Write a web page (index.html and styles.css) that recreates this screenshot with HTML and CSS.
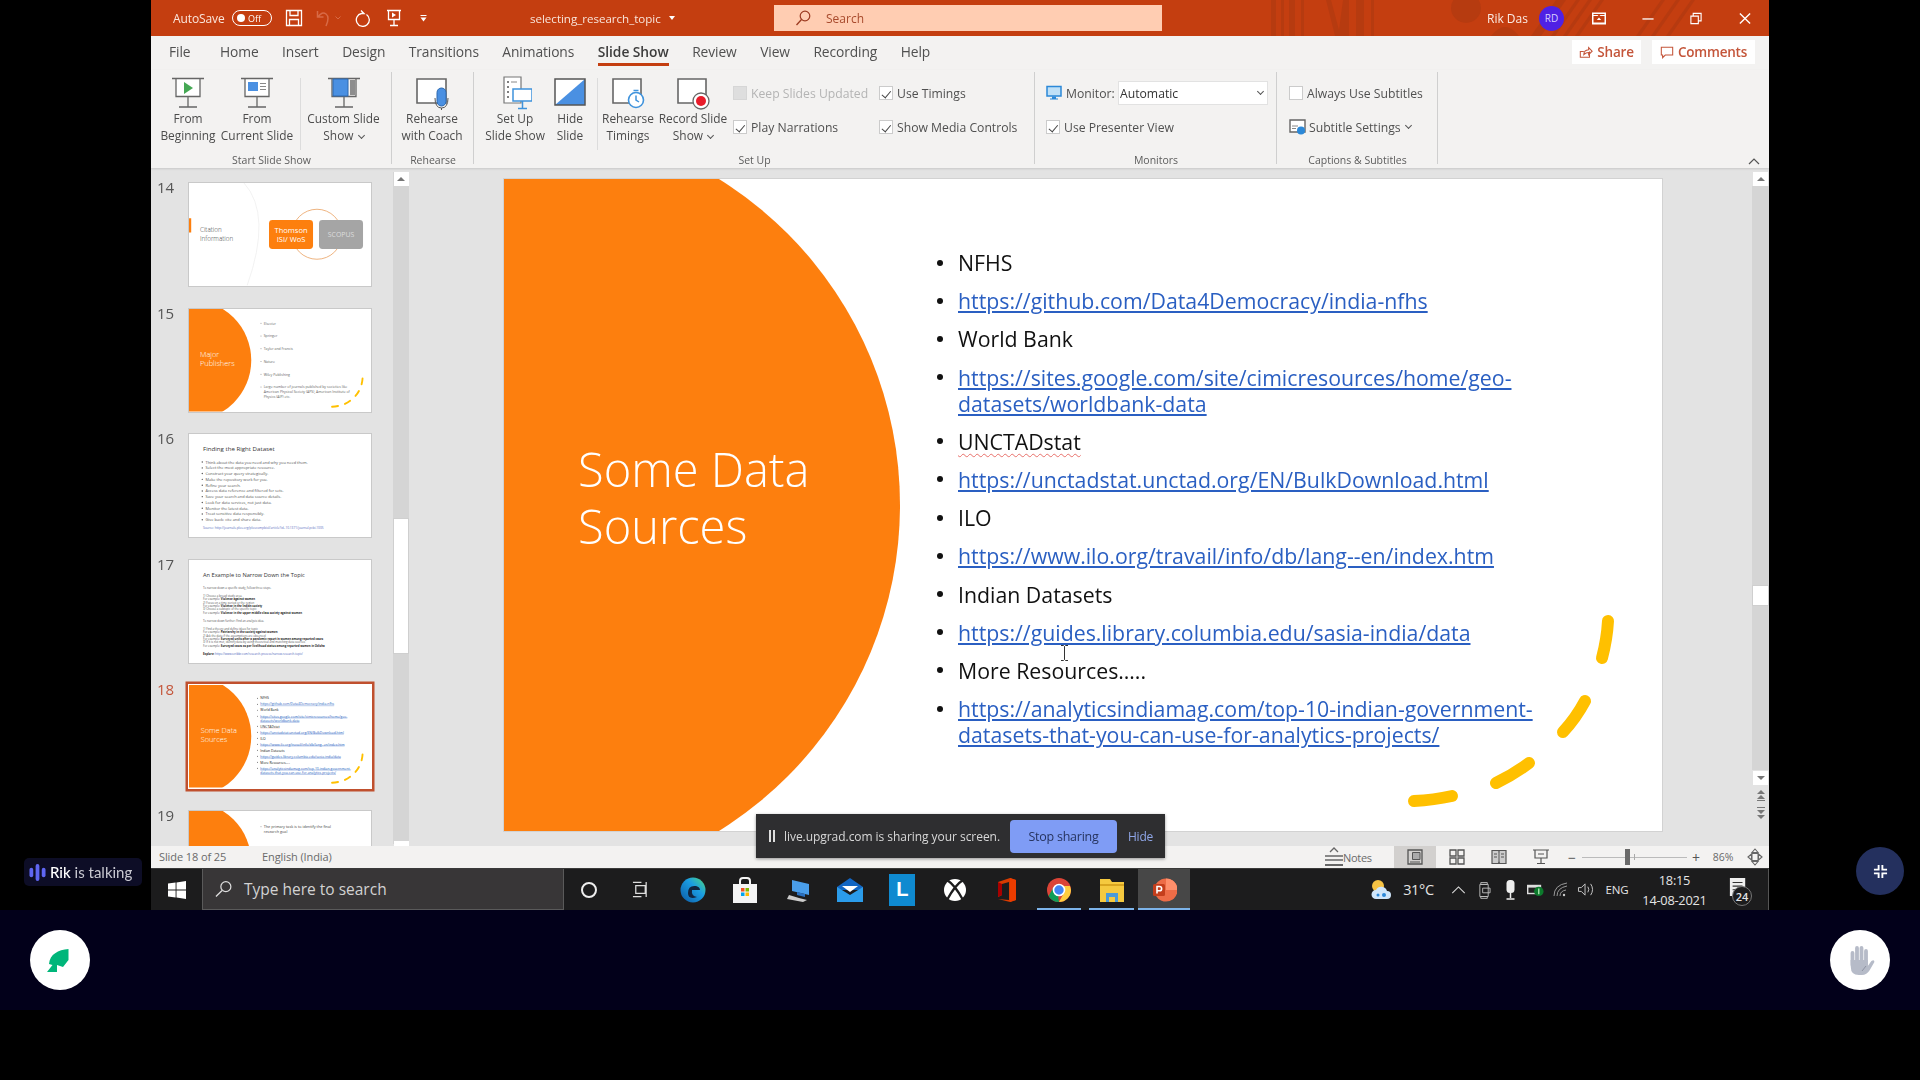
FILE: index.html
```html
<!DOCTYPE html>
<html lang="en">
<head>
<meta charset="utf-8">
<title>selecting_research_topic - PowerPoint</title>
<link rel="stylesheet" href="styles.css">
</head>
<body>
<svg class="defs" width="0" height="0" aria-hidden="true">
  <symbol id="half-circle" viewBox="0 0 1158 652"><circle cx="12" cy="326" r="384" fill="#fd7f0e"/></symbol>
  <symbol id="dashes" viewBox="0 0 1158 652"><g fill="none" stroke="#ffc000" stroke-width="12" stroke-linecap="round"><path d="M1104 442q-1 18-6 37"/><path d="M1081 522q-9 17-22 31"/><path d="M1025 584q-16 12-33 20"/><path d="M948 617q-18 4-38 5"/></g></symbol>
</svg>
<main class="stage">
  <section class="top">
    <aside class="gutter-left">
      <div class="talking">
        <svg class="talk-bars" viewBox="0 0 18 18"><g stroke="#5f66f2" stroke-linecap="round"><path stroke-width="4" d="M2.500 6v6"/><path stroke-width="4" d="M9 2v14"/><path stroke-width="4" d="M15.500 6v6"/></g></svg>
        <span><b>Rik</b> is talking</span>
      </div>
    </aside>

    <div class="window">
      <header class="titlebar">
        <svg class="title-art" viewBox="0 0 1618 36" preserveAspectRatio="none"><g fill="#b23a10" opacity=".75"><path d="M1120 0h5v36h-5zM1130 0h3v36h-3zM1138 0h6v36h-6zM1150 0h3v36h-3zM1175 0h5l8 30 4-30h6v36h-14zM1205 0h8v36h-8zM1220 0h3v36h-3z"/><circle cx="1315" cy="8" r="15"/><path d="M1340 36q14-18 28 0zM1405 0h10l-25 36h-10zM1425 0h4l-25 36h-4zM1437 0h4l-25 36h-4zM1449 0h4l-25 36h-4zM1510 0h4l-25 36h-4zM1525 0h4l-25 36h-4zM1540 0h4l-25 36h-4z"/></g></svg>
        <span class="autosave">AutoSave</span>
        <span class="toggle"><i class="toggle-dot"></i>Off</span>
        <svg class="qat qat-save" viewBox="0 0 18 18"><path fill="none" stroke="#fff" stroke-width="1.300" d="M1.500 1.500h15v15h-15zM5 1.500v5h8v-5M4.500 16.500v-6h9v6"/></svg>
        <svg class="qat qat-undo" viewBox="0 0 14 18"><path fill="none" stroke="#d86a46" stroke-width="1.500" d="M1.500 2v6h6M2 8q4-6 8-3t0 12"/></svg>
        <svg class="qat qat-mini" viewBox="0 0 6 4"><path fill="none" stroke="#d86a46" d="M.5.500L3 3 5.500.5"/></svg>
        <svg class="qat qat-redo" viewBox="0 0 18 18"><path fill="none" stroke="#fff" stroke-width="1.300" d="M6 1.500l3 3H6.500a6.500 6.500 0 1 0 5 1"/></svg>
        <svg class="qat qat-present" viewBox="0 0 16 18"><path fill="none" stroke="#fff" stroke-width="1.300" d="M1 1.500h14M2.500 1.500v9h11v-9M8 10.500v6M4 16.500h8"/><path fill="#fff" d="M6 3.500l4 2.500-4 2.500z"/></svg>
        <svg class="qat qat-more" viewBox="0 0 7 7"><path fill="#fff" d="M.5 0h6v1H.5zM.5 2.500h6L3.500 6.500z"/></svg>
        <div class="doc-title">selecting_research_topic<i class="caret"></i></div>
        <div class="search">
          <svg class="search-glass" viewBox="0 0 16 16"><circle cx="10" cy="6" r="4.800" fill="none" stroke="#9c3a20" stroke-width="1.200"/><path stroke="#9c3a20" stroke-width="1.300" d="M6.500 9.500L1.500 15"/></svg>
          <span>Search</span>
        </div>
        <span class="user">Rik Das</span>
        <span class="avatar">RD</span>
        <div class="winbtn"><svg viewBox="0 0 14 12" class="win-svg"><path fill="#fff" d="M0 0h14v12H0z"/><path fill="#c43e10" d="M1.500 1.500h11v1h-11zM1.500 10v-6.500h4L7 2l1.500 1.500h4V10zM7 5l-2.200 2.500h4.400z"/></svg></div>
        <div class="winbtn"><svg viewBox="0 0 14 14" class="win-svg"><path stroke="#fff" stroke-width="1.400" d="M1 7.500h12"/></svg></div>
        <div class="winbtn"><svg viewBox="0 0 14 14" class="win-svg"><path fill="none" stroke="#fff" stroke-width="1.200" d="M1.500 4.500h8v8h-8zM4 4.500V1.500h8.500v8h-3"/></svg></div>
        <div class="winbtn"><svg viewBox="0 0 14 14" class="win-svg"><path stroke="#fff" stroke-width="1.500" d="M1.500 1.500l11 11M12.500 1.500l-11 11"/></svg></div>
      </header>

      <nav class="tabs">
        <span class="tab tab-file">File</span>
        <span class="tab">Home</span>
        <span class="tab">Insert</span>
        <span class="tab">Design</span>
        <span class="tab">Transitions</span>
        <span class="tab">Animations</span>
        <span class="tab tab-active">Slide Show</span>
        <span class="tab">Review</span>
        <span class="tab">View</span>
        <span class="tab">Recording</span>
        <span class="tab">Help</span>
        <div class="tab-actions">
          <button class="action action-share"><svg viewBox="0 0 16 16"><path fill="none" stroke="#c4553a" stroke-width="1.200" d="M12 7.500v6.500H1.500V7.500h4M5.500 11q0-5 5.500-5.500V3l4 4-4 4V8.500q-3 0-5.500 2.500z"/></svg>Share</button>
          <button class="action action-comments"><svg viewBox="0 0 16 16"><path fill="none" stroke="#c4553a" stroke-width="1.200" d="M1.500 2.500h13v9H6l-3 3v-3H1.500z"/></svg>Comments</button>
        </div>
      </nav>

      <div class="ribbon">
        <section class="group group-start">
          <div class="group-body body-start">
            <div class="rbtn">
              <svg class="ricon" viewBox="0 0 34 34"><path fill="#fff" d="M5 2.500h24v18H5z"/><path fill="none" stroke="#666" stroke-width="1.300" d="M1 2.500h32M5 2.500v18h24v-18M17 20.500v10M8 31h18"/><path fill="#45a854" d="M13 6l9 6-9 6z"/></svg>
              <span>From<br>Beginning</span>
            </div>
            <div class="rbtn">
              <svg class="ricon" viewBox="0 0 34 34"><path fill="#fff" d="M5 2.500h24v18H5z"/><path fill="none" stroke="#666" stroke-width="1.300" d="M1 2.500h32M5 2.500v18h24v-18M17 20.500v10M8 31h18"/><path fill="#4a90e2" d="M8 6h10v9H8z"/><path stroke="#888" d="M20 7.500h6M20 10.500h6M20 13.500h6"/></svg>
              <span>From<br>Current Slide</span>
            </div>
            <i class="rsep"></i>
            <div class="rbtn">
              <svg class="ricon" viewBox="0 0 34 34"><path fill="none" stroke="#666" stroke-width="1.300" d="M1 2.500h32M5 2.500v18h24v-18M17 20.500v10M8 31h18"/><path fill="#4a90e2" stroke="#2c69b0" d="M6 3h15v17H6z"/><path fill="#8d8d8d" d="M23 4h5v15h-5z"/></svg>
              <span>Custom Slide<br>Show <i class="chev"></i></span>
            </div>
          </div>
          <div class="group-label">Start Slide Show</div>
        </section>

        <section class="group group-rehearse">
          <div class="group-body body-rehearse">
            <div class="rbtn">
              <svg class="ricon" viewBox="0 0 34 34"><path fill="#fff" stroke="#666" stroke-width="1.600" d="M2 3h29v24H2z"/><rect x="22" y="12" width="9" height="18" rx="4.500" fill="#4a90e2" stroke="#2c69b0"/><path fill="none" stroke="#555" d="M20 22q0 10 6.500 10t6.500-10M26.500 32v2"/></svg>
              <span>Rehearse<br>with Coach</span>
            </div>
          </div>
          <div class="group-label">Rehearse</div>
        </section>

        <section class="group group-setup">
          <div class="group-body body-setup">
            <div class="rbtn">
              <svg class="ricon" viewBox="0 0 34 34"><path fill="#fff" stroke="#777" stroke-width="1.200" d="M6 1h17v26H6z"/><path stroke="#555" stroke-width="1.500" d="M9 6h2M9 11h2M9 16h2M9 21h2"/><path stroke="#888" d="M13 6h6"/><path fill="#fff" stroke="#3f93dc" stroke-width="1.500" d="M15 13h19v12H15zM24.500 25v7M20 32.500h9"/></svg>
              <span>Set Up<br>Slide Show</span>
            </div>
            <div class="rbtn">
              <svg class="ricon" viewBox="0 0 34 34"><path fill="#fff" d="M2 3h30v26H2z"/><path fill="#4a90e2" d="M32 3v26H2z"/><path fill="none" stroke="#555" stroke-width="1.500" d="M2 3h30v26H2z"/></svg>
              <span>Hide<br>Slide</span>
            </div>
            <i class="rsep"></i>
            <div class="rbtn">
              <svg class="ricon" viewBox="0 0 34 34"><path fill="#fff" stroke="#666" stroke-width="1.600" d="M2 3h28v24H2z"/><circle cx="25" cy="24" r="7.500" fill="#fff" stroke="#3f93dc" stroke-width="1.600"/><path fill="none" stroke="#3f93dc" stroke-width="1.500" d="M25 19.500V24l3 2M22.500 14.500h5"/></svg>
              <span>Rehearse<br>Timings</span>
            </div>
            <div class="rbtn">
              <svg class="ricon" viewBox="0 0 34 34"><path fill="#fff" stroke="#666" stroke-width="1.600" d="M2 3h28v24H2z"/><circle cx="25" cy="25" r="8" fill="#fff" stroke="#666" stroke-width="1.300"/><circle cx="25" cy="25" r="5" fill="#e81c2a"/></svg>
              <span>Record Slide<br>Show <i class="chev"></i></span>
            </div>
            <div class="checks">
              <label class="check check-off"><i class="box box-dim"></i>Keep Slides Updated</label>
              <label class="check"><i class="box box-on"></i>Use Timings</label>
              <label class="check"><i class="box box-on"></i>Play Narrations</label>
              <label class="check"><i class="box box-on"></i>Show Media Controls</label>
            </div>
          </div>
          <div class="group-label">Set Up</div>
        </section>

        <section class="group group-monitors">
          <div class="group-body body-stack">
            <div class="stack-row">
              <svg class="monitor-icon" viewBox="0 0 16 16"><path fill="#bfe0f7" stroke="#2b88d8" stroke-width="1.500" d="M1 1.500h14v9.500H1z"/><path fill="#2b88d8" d="M6 11.500h4v2h2v1H4v-1h2z"/></svg>
              <span class="monitor-label">Monitor:</span>
              <div class="select"><span>Automatic</span><i class="chev"></i></div>
            </div>
            <div class="stack-row"><label class="check"><i class="box box-on"></i>Use Presenter View</label></div>
          </div>
          <div class="group-label">Monitors</div>
        </section>

        <section class="group group-captions">
          <div class="group-body body-stack">
            <div class="stack-row"><label class="check"><i class="box"></i>Always Use Subtitles</label></div>
            <div class="stack-row subtitle-row">
              <svg class="sub-icon" viewBox="0 0 17 16"><path fill="#fff" stroke="#666" stroke-width="1.400" d="M1 1h15v12H1z"/><path stroke="#888" d="M3 7h6M3 9.500h4"/><circle cx="12" cy="11.500" r="4" fill="#2b88d8"/></svg>
              <span>Subtitle Settings</span><i class="chev"></i>
            </div>
          </div>
          <div class="group-label">Captions &amp; Subtitles</div>
        </section>

        <div class="collapse"><svg viewBox="0 0 12 7"><path fill="none" stroke="#555" stroke-width="1.200" d="M1 6l5-5 5 5"/></svg></div>
      </div>

      <div class="workspace">
        <aside class="panel">
          <div class="thumbs">
            <div class="thumb-row">
              <span class="thumb-num">14</span>
              <div class="thumb"><div class="slide">
                <svg class="slide-art" viewBox="0 0 1158 652"><path d="M0 225h14v90H0z" fill="#fd7f0e"/><path fill="none" stroke="#eee" stroke-width="5" d="M350 0q180 200 20 652"/><circle cx="814" cy="326" r="159" fill="none" stroke="#e9a05e" stroke-width="5"/></svg>
                <div class="t14-label">Citation<br>Information</div>
                <div class="t14-box t14-orange">Thomson<br>ISI/ WoS</div>
                <div class="t14-box t14-grey">SCOPUS</div>
              </div></div>
            </div>
            <div class="thumb-row">
              <span class="thumb-num">15</span>
              <div class="thumb"><div class="slide">
                <svg class="slide-art" viewBox="0 0 1158 652"><use href="#half-circle"/><use href="#dashes"/></svg>
                <div class="slide-title title-small">Major<br>Publishers</div>
                <ul class="slide-list list-sparse">
                  <li>Elsevier</li><li>Springer</li><li>Taylor and Francis</li><li>Nature</li><li>Wiley Publishing</li>
                  <li>Large number of journals published by societies like<br>American Physical Society (APS), American Institute of<br>Physics (AIP) etc.</li>
                </ul>
              </div></div>
            </div>
            <div class="thumb-row">
              <span class="thumb-num">16</span>
              <div class="thumb"><div class="slide slide-doc">
                <div class="doc-head">Finding the Right Dataset</div>
                <ul class="doc-list">
                  <li>Think about the data you need and why you need them.</li><li>Select the most appropriate resource.</li><li>Construct your query strategically.</li><li>Make the repository work for you.</li><li>Refine your search.</li><li>Access data reference and filtered for sets.</li><li>Save your search and data source details.</li><li>Look for data services, not just data.</li><li>Monitor the latest data.</li><li>Treat sensitive data responsibly.</li><li>Give back: cite and share data.</li>
                </ul>
                <div class="doc-source">Source: http://journals.plos.org/ploscompbiol/article?id=10.1371/journal.pcbi.1005</div>
              </div></div>
            </div>
            <div class="thumb-row">
              <span class="thumb-num">17</span>
              <div class="thumb"><div class="slide slide-doc">
                <div class="doc-head doc-head-wide">An Example to Narrow Down the Topic</div>
                <div class="doc-para">
                  <p>To narrow down a specific study, follow three steps.</p>
                  <p>1) Choose a broad study area.<br>For example: <b>Violence against women</b><br>2) Focus on a time period or the region<br>For example: <b>Violence in the Indian society</b><br>3) Choose a subtopic of the specific topic<br>For example: <b>Violence in the upper middle class society against women</b></p>
                  <p>To narrow down further: Find an analysis idea.</p>
                  <p>1) Find a theory and define ideas for topic<br>For example: <b>Patriarchy in the society against women</b><br>2) Ask the data if the assumptions are observed<br>For example: <b>Surveyed units after a pandemic report in women among reported cases</b><br>3) If it is not met, identify data by using theoretical and matching data sources<br>For example: <b>Surveyed cases as per livelihood status among reported women in Odisha</b></p>
                  <p class="doc-blue"><b>Explore:</b> https://www.scribbr.com/research-process/narrow-research-topic/</p>
                </div>
              </div></div>
            </div>
            <div class="thumb-row thumb-selected">
              <span class="thumb-num">18</span>
              <div class="thumb"><div class="slide">
                <svg class="slide-art" viewBox="0 0 1158 652"><use href="#half-circle"/><use href="#dashes"/></svg>
                <div class="slide-title">Some Data<br>Sources</div>
                <ul class="slide-list">
                  <li>NFHS</li>
                  <li><a>https://github.com/Data4Democracy/india-nfhs</a></li>
                  <li>World Bank</li>
                  <li><a>https://sites.google.com/site/cimicresources/home/geo-<br>datasets/worldbank-data</a></li>
                  <li><span class="squiggle">UNCTADstat</span></li>
                  <li><a>https://unctadstat.unctad.org/EN/BulkDownload.html</a></li>
                  <li>ILO</li>
                  <li><a>https://www.ilo.org/travail/info/db/lang--en/index.htm</a></li>
                  <li>Indian Datasets</li>
                  <li><a>https://guides.library.columbia.edu/sasia-india/data</a></li>
                  <li>More Resources…..</li>
                  <li><a>https://analyticsindiamag.com/top-10-indian-government-<br>datasets-that-you-can-use-for-analytics-projects/</a></li>
                </ul>
              </div></div>
            </div>
            <div class="thumb-row">
              <span class="thumb-num">19</span>
              <div class="thumb"><div class="slide">
                <svg class="slide-art" viewBox="0 0 1158 652"><use href="#half-circle"/></svg>
                <ul class="slide-list list-sparse list-19"><li>The primary task is to identify the final<br>research goal</li></ul>
              </div></div>
            </div>
          </div>
          <div class="vscroll vscroll-panel">
            <span class="sb-btn"><i class="tri-up"></i></span>
            <span class="sb-gap sb-gap-a"></span>
            <span class="sb-thumb"></span>
            <span class="sb-gap sb-gap-b"></span>
            <span class="sb-btn sb-btn-end"><i class="tri-down"></i></span>
          </div>
        </aside>

        <div class="canvas">
          <div class="slide main-slide">
            <svg class="slide-art" viewBox="0 0 1158 652"><use href="#half-circle"/><use href="#dashes"/></svg>
            <div class="slide-title">Some Data<br>Sources</div>
            <ul class="slide-list">
              <li>NFHS</li>
              <li><a>https://github.com/Data4Democracy/india-nfhs</a></li>
              <li>World Bank</li>
              <li><a>https://sites.google.com/site/cimicresources/home/geo-<br>datasets/worldbank-data</a></li>
              <li><span class="squiggle">UNCTADstat</span></li>
              <li><a>https://unctadstat.unctad.org/EN/BulkDownload.html</a></li>
              <li>ILO</li>
              <li><a>https://www.ilo.org/travail/info/db/lang--en/index.htm</a></li>
              <li>Indian Datasets</li>
              <li><a>https://guides.library.columbia.edu/sasia-india/data</a></li>
              <li>More Resources…..</li>
              <li><a>https://analyticsindiamag.com/top-10-indian-government-<br>datasets-that-you-can-use-for-analytics-projects/</a></li>
            </ul>
            <svg class="ibeam" viewBox="0 0 9 16"><path fill="none" stroke="#333" d="M1 .5h2.500l1 1 1-1H8M4.500 1.500v13M1 15.500h2.500l1-1 1 1H8"/></svg>
          </div>
        </div>

        <div class="vscroll vscroll-main">
          <span class="sb-btn"><i class="tri-up"></i></span>
          <span class="sb-gap sb-gap-c"></span>
          <span class="sb-thumb sb-thumb-small"></span>
          <span class="sb-gap sb-gap-d"></span>
          <span class="sb-btn sb-btn-end"><i class="tri-down"></i></span>
          <svg class="sb-jump" viewBox="0 0 10 12"><path fill="#777" d="M5 0l4 4H1zM5 5l4 4H1zM1 10h8v1H1z"/></svg>
          <svg class="sb-jump" viewBox="0 0 10 12"><path fill="#777" d="M1 0h8v1H1zM5 7L1 3h8zM5 12L1 8h8z"/></svg>
        </div>
      </div>

      <footer class="statusbar">
        <span class="st-slide">Slide 18 of 25</span>
        <span class="st-lang">English (India)</span>
        <div class="st-right">
          <div class="st-notes"><svg viewBox="0 0 18 22"><path fill="none" stroke="#666" stroke-width="1.300" d="M5 6l4-4 4 4M0 10h18M0 14h18"/><path stroke="#666" stroke-width="2" d="M0 19h18"/></svg><span>Notes</span></div>
          <span class="st-view st-view-on"><svg viewBox="0 0 16 16"><path fill="none" stroke="#555" stroke-width="1.300" d="M1 1h14v14H1z"/><path fill="#aaa" stroke="#555" d="M5.500 3.500h7.500v7H5.500z"/><path stroke="#555" d="M3 13h10"/></svg></span>
          <span class="st-view"><svg viewBox="0 0 16 16"><path fill="none" stroke="#555" stroke-width="1.300" d="M1 1h6v6H1zM9 1h6v6H9zM1 9h6v6H1zM9 9h6v6H9z"/></svg></span>
          <span class="st-view"><svg viewBox="0 0 16 16"><path fill="#ccc" stroke="#555" stroke-width="1.200" d="M1 1.500h6.500l.5 1 .5-1H15v13H8.500l-.5-1-.5 1H1z"/><path stroke="#555" d="M3 5h3M3 8h3M10 5h3M10 8h3M8 3v11"/></svg></span>
          <span class="st-view"><svg viewBox="0 0 16 16"><path fill="none" stroke="#555" stroke-width="1.200" d="M0 1h16M2 1v8h12V1M8 9v5M4 14.500h8"/><path stroke="#555" d="M5 5h6"/></svg></span>
          <span class="zoom-sign">−</span>
          <div class="zoom-track"><i class="zoom-tick"></i><i class="zoom-knob"></i></div>
          <span class="zoom-sign zoom-plus">+</span>
          <span class="zoom-pct">86%</span>
          <span class="zoom-fit"><svg viewBox="0 0 16 18"><path fill="none" stroke="#666" stroke-width="1.100" d="M8 1l3 3.500H5zM8 17l3-3.500H5zM1 9l3.500-3v6zM15 9l-3.500-3v6z"/><path fill="none" stroke="#666" d="M5 5.500h6v7H5z"/></svg></span>
        </div>
      </footer>

      <div class="taskbar">
        <span class="start"><svg viewBox="0 0 18 18"><path fill="#fff" d="M0 2.600L7.600 1.500v7H0zM8.500 1.400L18 0v8.500H8.500zM0 9.500h7.600v7L0 15.400zM8.500 9.500H18V18l-9.500-1.400z"/></svg></span>
        <div class="task-search">
          <svg viewBox="0 0 18 18"><circle cx="11.500" cy="6.500" r="5.300" fill="none" stroke="#ddd" stroke-width="1.300"/><path stroke="#ddd" stroke-width="1.400" d="M7.500 10.500L1 17"/></svg>
          <span>Type here to search</span>
        </div>
        <span class="task-cell task-cortana"><i class="ring"></i></span>
        <span class="task-cell task-view"><svg viewBox="0 0 18 18"><path fill="none" stroke="#ddd" stroke-width="1.300" d="M4 5h10v8H4zM1 1.500h9M1 16.500h9M15 1v16"/></svg></span>
        <span class="task-cell"><svg viewBox="0 0 26 26"><defs><linearGradient id="edge" x1="0" y1="1" x2="1" y2="0"><stop offset="0" stop-color="#0c59a4"/><stop offset=".6" stop-color="#1b9de2"/><stop offset="1" stop-color="#4fdc7c"/></linearGradient></defs><circle cx="13" cy="13" r="12.500" fill="url(#edge)"/><path fill="#12253f" d="M8 16q0-8 8-7 4 1 4 4h-8q-1 6 5 7-9 3-9-4z"/></svg></span>
        <span class="task-cell"><svg viewBox="0 0 26 26"><path fill="#f4f4f4" d="M1 7h24v19H1z"/><path fill="none" stroke="#f4f4f4" stroke-width="2" d="M8 8V4q0-3 3-3h4q3 0 3 3v4"/><path fill="#f25022" d="M9 11h3.500v3.500H9z"/><path fill="#7fba00" d="M13.500 11H17v3.500h-3.500z"/><path fill="#00a4ef" d="M9 15.500h3.500V19H9z"/><path fill="#ffb900" d="M13.500 15.500H17V19h-3.500z"/></svg></span>
        <span class="task-cell"><svg viewBox="0 0 26 26"><path fill="#4a9eea" d="M7 3l17 4v11l-17-4z"/><path fill="#2a70c0" d="M12 15l8 2v3l-8-2z"/><path fill="#ccc" d="M4 18l10 3 8 2-4 2-16-3z"/></svg></span>
        <span class="task-cell"><svg viewBox="0 0 26 26"><path fill="#1266c4" d="M13 1l13 9v3H0v-3z"/><path fill="#2b9cea" d="M0 10l13 8 13-8v15H0z"/><path fill="#fff" d="M5 9h16l-8 6z"/></svg></span>
        <span class="task-cell"><span class="lyncl">L</span></span>
        <span class="task-cell"><svg viewBox="0 0 26 26"><circle cx="13" cy="13" r="11" fill="#fff"/><path fill="none" stroke="#1d1d1e" stroke-width="2.400" d="M5 3q8 5 16 20M21 3Q13 8 5 23"/></svg></span>
        <span class="task-cell"><svg viewBox="0 0 26 26"><path fill="#d83b01" d="M4 5L16 1l6 2v20l-6 2-12-3 11 1V5l-7 2v11l-4 2z"/><path fill="#a80000" d="M4 20V5l4 2v11z"/><path fill="#eb3c00" d="M16 1l6 2v20l-6 2z"/></svg></span>
        <span class="task-cell task-running"><svg viewBox="0 0 26 26"><circle cx="13" cy="13" r="12" fill="#db4437"/><path fill="#0f9d58" d="M13 25a12 12 0 0 1-10.400-6l5.200-9 5 10h-.6z"/><path fill="#ffcd40" d="M25 13a12 12 0 0 1-12 12l6-11-2-5h7z"/><circle cx="13" cy="13" r="5.500" fill="#4285f4" stroke="#fff" stroke-width="1.600"/></svg></span>
        <span class="task-cell task-running"><svg viewBox="0 0 26 26"><path fill="#f5c93f" d="M1 2h10l2 3h12v20H1z"/><path fill="#d9a520" d="M1 7h24v2H1z"/><path fill="#4a9ad8" d="M7 16h12v9h-3v-5h-6v5H7z"/></svg></span>
        <span class="task-cell task-running task-active"><svg viewBox="0 0 26 26"><circle cx="15" cy="13" r="11.500" fill="#ed6c47"/><path fill="#ff8f6b" d="M15 1.500a11.500 11.500 0 0 1 11.500 11.500H15z"/><rect x="2" y="7" width="12" height="12" rx="1.500" fill="#c43e1c"/><path fill="none" stroke="#fff" stroke-width="1.600" d="M6 16.500V9.500h2.500a2 2 0 0 1 0 4.300H6"/></svg></span>

        <div class="tray">
          <span class="tray-item"><svg class="tray-weather" viewBox="0 0 22 22"><circle cx="8" cy="7" r="6" fill="#f6c344"/><path fill="#cfe6fb" d="M6 20a4.500 4.500 0 0 1 0-9 6 6 0 0 1 11 1 4 4 0 0 1 0 8z"/><circle cx="14" cy="16" r="2" fill="#2b88d8"/><circle cx="8" cy="16" r="1.500" fill="#2b88d8"/></svg></span>
          <span class="tray-item tray-temp">31°C</span>
          <span class="tray-item"><svg class="tray-chev" viewBox="0 0 16 9"><path fill="none" stroke="#ddd" stroke-width="1.200" d="M1 8l7-7 7 7"/></svg></span>
          <span class="tray-item"><svg class="tray-tiny" viewBox="0 0 14 20"><path fill="none" stroke="#bbb" d="M3 2h7v2H3zM2 4h9v13H2zM3 17h7v2H3zM5 8h8v5H5z"/></svg></span>
          <span class="tray-item"><svg class="tray-tiny" viewBox="0 0 12 20"><rect x="2" y="0" width="8" height="13" rx="3.500" fill="#eee"/><path stroke="#eee" stroke-width="1.500" d="M6 13v5M2 19h8"/></svg></span>
          <span class="tray-item"><svg class="tray-wide" viewBox="0 0 18 14"><path fill="#ddd" d="M0 2h15v10H0z"/><path fill="#222" d="M1.500 5h12v5.500h-12z"/><circle cx="12.500" cy="9" r="5" fill="#0c7a2c"/><path stroke="#cfc" stroke-width="1.200" d="M12.500 6v6"/></svg></span>
          <span class="tray-item"><svg class="tray-wide" viewBox="0 0 15 15"><path fill="none" stroke="#999" d="M1 14Q1 3 14 1M4 14q0-8 10-10M7 14q0-5 6-6"/><circle cx="11" cy="13" r="1.200" fill="#ccc"/></svg></span>
          <span class="tray-item"><svg class="tray-wide" viewBox="0 0 17 16"><path fill="none" stroke="#ccc" d="M1 6h3l4-4v12l-4-4H1zM11 5q2 3 0 6M14 2q4 6 0 12"/></svg></span>
          <span class="tray-item tray-lang">ENG</span>
          <span class="tray-item tray-clock">18:15<br>14-08-2021</span>
          <span class="tray-item tray-note">
            <svg class="note-icon" viewBox="0 0 20 20"><path fill="#eee" d="M1 0h17v15l-5 5H1z"/><path stroke="#333" stroke-width="1.200" d="M4 5h11M4 9h11M4 13h6"/></svg>
            <span class="note-badge">24</span>
          </span>
        </div>
      </div>

      <div class="share-bar">
        <span class="pause"></span>
        <span class="share-text">live.upgrad.com is sharing your screen.</span>
        <button class="stop">Stop sharing</button>
        <span class="hide">Hide</span>
      </div>
    </div>

    <aside class="gutter-right">
      <span class="exit-full"><svg viewBox="0 0 16 16"><path fill="none" stroke="#fff" stroke-width="2" d="M6 1v5H1M10 1v5h5M6 15v-5H1M10 15v-5h5"/></svg></span>
    </aside>
  </section>

  <section class="dock">
    <span class="dock-btn"><svg viewBox="0 0 60 60"><path fill="#00b67a" d="M38.500 19C28 20 20 24 19 34l3.500 1L17 42h10v-7l6 2 5.500-7z"/></svg></span>
    <span class="dock-btn"><svg viewBox="0 0 60 60"><g fill="none" stroke="#b6bbc8" stroke-linecap="round" stroke-width="3.800"><path d="M22.500 23v12M27 18v15M31.500 18v15M36 21v14"/></g><path fill="#b6bbc8" d="M20.600 30h17.200v6l3.600-5q3-2 3 1l-4.600 8q-3 5-8 5h-3q-8 0-8-8z"/><path fill="none" stroke="#8e93a3" d="M32 41l4-5"/></svg></span>
  </section>
  <div class="floor"></div>
</main>
</body>
</html>
```
FILE: styles.css
```css
* { box-sizing: border-box; }
html, body { margin: 0; padding: 0; }
body {
  width: 1920px;
  height: 1080px;
  overflow: hidden;
  background: #000;
  font-family: "Open Sans", "Noto Sans", sans-serif;
  color: #444;
}
i { font-style: normal; }
button { font: inherit; border: 0; }
svg { display: block; }
.defs { position: absolute; }

.stage { display: grid; grid-template-rows: 910px 100px 70px; width: 1920px; height: 1080px; filter: blur(.6px); }
.top { display: grid; grid-template-columns: 151px 1618px 151px; min-height: 0; }
.gutter-left { display: flex; align-items: flex-end; padding: 0 0 24px 24px; }
.gutter-right { display: flex; align-items: flex-end; padding: 0 0 15px 87px; }
.talking {
  display: flex; align-items: center; gap: 4px;
  width: 118px; height: 28px; padding-left: 5px;
  background: #0d0d26; border-radius: 5px;
  font: 400 15px/28px Lato, sans-serif; color: #c9c9d2; white-space: nowrap;
}
.talking b { font-weight: 500; color: #fff; }
.talk-bars { width: 17px; height: 17px; flex: none; }
.exit-full { display: flex; align-items: center; justify-content: center; width: 48px; height: 48px; border-radius: 50%; background: #24305e; }
.exit-full svg { width: 15px; height: 15px; }

.window { position: relative; display: flex; flex-direction: column; width: 1618px; height: 910px; background: #f3f2f1; }

/* title bar */
.titlebar { position: relative; display: flex; align-items: center; flex: none; height: 36px; padding-left: 22px; background: #c43e10; color: #fff; }
.titlebar > * { flex: none; }
.title-art { position: absolute; left: 0; top: 0; width: 100%; height: 36px; }
.autosave { position: relative; width: 54px; font-size: 12px; letter-spacing: -.1px; color: #fbe6dc; white-space: nowrap; }
.toggle { position: relative; display: flex; align-items: center; gap: 3px; width: 40px; height: 16px; margin-left: 5px; padding-left: 4px; border: 1.200px solid #fff; border-radius: 9px; font-size: 9px; }
.toggle-dot { width: 8px; height: 8px; border-radius: 50%; background: #fff; }
.qat { position: relative; }
.qat-save { width: 18px; height: 18px; margin-left: 13px; }
.qat-undo { width: 14px; height: 18px; margin-left: 13px; }
.qat-mini { width: 6px; height: 4px; margin-left: 5px; }
.qat-redo { width: 18px; height: 18px; margin-left: 14px; }
.qat-present { width: 16px; height: 18px; margin-left: 13px; }
.qat-more { width: 7px; height: 7px; margin-left: 18px; }
.doc-title { position: relative; display: flex; align-items: center; width: 244px; margin-left: 103px; font-size: 11.600px; letter-spacing: -.03px; color: #f8e4da; white-space: nowrap; }
.caret { width: 0; height: 0; margin-left: 8px; border: 3px solid transparent; border-top: 4px solid #fff; border-bottom: 0; }
.search { position: relative; display: flex; align-items: center; width: 388px; height: 26px; padding-left: 21px; background: #ffcdb2; font-size: 12px; color: #a84a2c; }
.search-glass { width: 16px; height: 16px; margin-right: 15px; }
.user { position: relative; width: 41px; margin-left: 325px; font-size: 12px; letter-spacing: 0; color: #fbeae2; white-space: nowrap; }
.avatar { position: relative; display: flex; align-items: center; justify-content: center; width: 25px; height: 25px; margin: 0 11px; border-radius: 50%; background: #4f21e4; font-size: 10px; color: #d8d0ff; }
.winbtn { position: relative; display: flex; align-items: center; justify-content: center; width: 48.500px; }
.win-svg { width: 14px; height: 13px; }

/* tabs */
.tabs { display: flex; align-items: center; flex: none; height: 34px; padding: 0 0 2px 18px; gap: 23.500px; font-size: 13.800px; }
.tab { position: relative; line-height: 32px; color: #505050; white-space: nowrap; letter-spacing: -.1px; }
.tab-file { margin-right: 6px; }
.tab-active { font-weight: 600; color: #3c3c3c; letter-spacing: -.05px; }
.tab-active::after { content: ""; position: absolute; left: 0; right: 0; bottom: 2px; height: 3px; background: #c43e10; }
.tab-actions { display: flex; gap: 11px; margin-left: auto; margin-right: 14px; }
.action { display: flex; align-items: center; justify-content: center; gap: 4px; height: 24px; background: #fff; color: #c4553a; font-size: 13.500px; font-weight: 600; letter-spacing: -.2px; }
.action svg { width: 14px; height: 14px; }
.action-share { width: 69px; }
.action-comments { width: 103px; }

/* ribbon */
.ribbon { display: flex; flex: none; height: 98px; box-shadow: 0 1px 2px rgba(0,0,0,.12); position: relative; }
.group { display: flex; flex-direction: column; flex: none; position: relative; }
.group::after { content: ""; position: absolute; right: 0; top: 2px; bottom: 4px; width: 1px; background: #cfcfcf; }
.group-start { width: 241px; }
.group-rehearse { width: 82px; }
.group-setup { width: 561px; }
.group-monitors { width: 242px; }
.group-captions { width: 161px; }
.group-body { flex: none; height: 82px; padding-top: 6px; }
.group-label { height: 16px; font-size: 10.500px; line-height: 16px; text-align: center; color: #5c5c5c; }
.body-start { display: grid; grid-template-columns: 66px 72px 14px 73px; padding-left: 4px; align-content: start; }
.body-rehearse { display: grid; grid-template-columns: 80px; align-content: start; }
.body-setup { display: grid; grid-template-columns: 66px 44px 10px 52px 78px auto; padding-left: 8px; align-content: start; }
.rbtn { display: flex; flex-direction: column; align-items: center; font-size: 11.900px; line-height: 17px; letter-spacing: 0; text-align: center; color: #4c4c4c; white-space: nowrap; }
.ricon { width: 34px; height: 34px; flex: none; }
.rsep { justify-self: center; width: 1px; height: 72px; margin-top: 2px; background: #dcdcdc; }
.chev { display: inline-block; width: 5px; height: 5px; margin-left: 2px; border: solid #555; border-width: 0 1px 1px 0; transform: translateY(-2px) rotate(45deg); }
.checks { display: grid; grid-template-columns: 146px auto; grid-auto-rows: 34px; margin-left: 1px; }
.check { display: flex; align-items: center; gap: 4px; font-size: 12.200px; letter-spacing: 0; color: #505050; white-space: nowrap; }
.check-off { color: #b4b4b4; }
.box { position: relative; display: block; flex: none; width: 14px; height: 14px; background: #fff; border: 1px solid #cbcbcb; }
.box-dim { background: #dedede; border-color: #d6d6d6; }
.box-on::after { content: ""; position: absolute; left: 4px; top: 1.500px; width: 4px; height: 7.500px; border: solid #444; border-width: 0 1.200px 1.200px 0; transform: rotate(40deg); }
.body-stack { padding-left: 11px; }
.group-captions .body-stack { padding-left: 12px; }
.stack-row { display: flex; align-items: center; height: 34px; font-size: 12.200px; letter-spacing: 0; color: #505050; white-space: nowrap; }
.monitor-icon { width: 16px; height: 16px; flex: none; margin-right: 4px; }
.monitor-label { width: 52px; }
.select { display: flex; align-items: center; justify-content: space-between; width: 150px; height: 24px; padding: 0 4px 0 1px; background: #fff; border: 1px solid #e2e2e2; color: #333; }
.sub-icon { width: 17px; height: 16px; margin-right: 3px; }
.subtitle-row .chev { margin-left: 5px; }
.collapse { flex: 1; display: flex; justify-content: flex-end; align-items: flex-end; padding: 0 9px 3px 0; }
.collapse svg { width: 12px; height: 7px; }

/* workspace */
.workspace { display: flex; flex: none; height: 678px; background: #e3e3e3; }
.panel { display: flex; flex: none; width: 263px; }
.thumbs { flex: none; width: 242px; height: 678px; padding-top: 15px; overflow: hidden; }
.thumb-row { display: grid; grid-template-columns: 38px 182px; height: 125.500px; }
.thumb-num { padding-left: 6px; font-size: 15px; line-height: 10px; margin-top: -1px; color: #555; }
.thumb-selected .thumb-num { color: #c4553a; }
.thumb { width: 182px; height: 103px; overflow: hidden; background: #fff; box-shadow: 0 0 0 1px #c9c9c9; }
.thumb-selected .thumb { box-shadow: 0 0 0 1px #fff, 0 0 0 3.500px #c0502e; }
.thumb .slide { transform: scale(.1572); transform-origin: 0 0; }

.vscroll { display: flex; flex-direction: column; align-items: center; flex: none; }
.vscroll-panel { width: 16px; margin: 4px 0 2px 0; background: #d5d5d5; }
.vscroll-main { width: 17px; padding-top: 4px; }
.sb-btn { display: flex; align-items: center; justify-content: center; flex: none; width: 15px; height: 14px; background: #fff; }
.tri-up { width: 0; height: 0; border: 4px solid transparent; border-top: 0; border-bottom: 4px solid #777; }
.tri-down { width: 0; height: 0; border: 4px solid transparent; border-bottom: 0; border-top: 4px solid #777; }
.sb-thumb { flex: none; width: 16px; height: 136px; background: #fff; border: 1px solid #cfcfcf; }
.sb-gap { flex: none; width: 100%; background: #d5d5d5; }
.sb-gap-a { height: 332px; }
.sb-gap-b { height: 186px; }
.sb-gap-c { height: 399px; }
.sb-thumb-small { width: 17px; height: 21px; }
.sb-gap-d { height: 164px; }
.sb-btn-end { margin-top: 1px; }
.sb-jump { width: 10px; height: 12px; margin-top: 5px; }

.canvas { flex: 1; display: flex; justify-content: center; padding-top: 11px; min-width: 0; }

/* slides (drawn at full size; the thumbnails scale them down) */
.slide { position: relative; display: flex; flex: none; width: 1158px; height: 652px; background: #fff; overflow: hidden; font-family: "Open Sans", sans-serif; color: #111; }
.main-slide { box-shadow: 0 0 0 1px #d2d2d2; }
.slide-art { position: absolute; left: 0; top: 0; width: 1158px; height: 652px; }
.slide-title { position: relative; flex: none; width: 454px; align-self: center; margin-bottom: 14px; padding-left: 74px; font-size: 47px; font-weight: 300; line-height: 57px; color: #fff; white-space: nowrap; }
.title-small { padding-left: 70px; }
.slide-list { position: relative; margin: 0; padding: 71px 0 0; list-style: none; font-size: 21.300px; line-height: 26px; white-space: nowrap; }
.slide-list li { position: relative; margin-bottom: 12.200px; }
.slide-list li::before { content: ""; position: absolute; left: -21.500px; top: 9.500px; width: 6px; height: 6px; border-radius: 50%; background: #111; }
.slide-list a { color: #2a5fc2; text-decoration: underline; }
.squiggle { text-decoration: underline wavy #e8706a 1px; text-underline-offset: 3px; }
.list-sparse { padding-top: 76px; margin-left: 21px; font-size: 22px; line-height: 30px; color: #666; }
.list-sparse li { margin-bottom: 51px; }
.list-sparse li::before { left: -20px; top: 12px; background: #666; }
.list-19 { margin-left: 475px; padding-top: 85px; font-size: 24px; color: #444; }
.ibeam { position: absolute; left: 556px; top: 466px; width: 9px; height: 16px; }

.slide-doc { display: block; padding: 66px 60px 0 89px; }
.doc-head { font-size: 39px; line-height: 54px; color: #333; white-space: nowrap; }
.doc-head-wide { font-size: 36px; }
.doc-list { margin: 40px 0 0; padding: 0 0 0 16px; font-size: 25px; line-height: 36.700px; color: #555; white-space: nowrap; }
.doc-source { margin-top: 18px; font-size: 20px; line-height: 27px; color: #5a6ec0; white-space: nowrap; }
.doc-para { margin-top: 45px; font-size: 18px; line-height: 22px; color: #555; white-space: nowrap; }
.doc-para p { margin: 0 0 28px; }
.doc-para b { color: #222; }
.doc-blue { color: #4a62b8; }
.t14-label { position: absolute; left: 70px; top: 270px; font-size: 40px; line-height: 57px; font-weight: 300; color: #444; }
.t14-box { position: absolute; top: 235px; height: 185px; display: flex; align-items: center; justify-content: center; text-align: center; border-radius: 22px; font-size: 48px; line-height: 62px; color: #fff; }
.t14-orange { left: 509px; width: 280px; background: #fd7f0e; }
.t14-grey { left: 827px; width: 280px; background: #a5a5a5; color: #ddd; font-size: 44px; }

/* status */
.statusbar { display: flex; align-items: center; flex: none; height: 22px; padding-bottom: 2px; font-size: 11px; color: #6a6a6a; background: #f3f2f1; }
.st-slide { width: 111px; padding-left: 8px; white-space: nowrap; letter-spacing: -.1px; }
.st-lang { white-space: nowrap; letter-spacing: -.1px; }
.st-right { display: flex; align-items: center; margin-left: auto; height: 22px; margin-bottom: -2px; }
.st-notes { display: flex; align-items: center; width: 49px; margin-right: 20px; letter-spacing: -.3px; }
.st-notes svg { width: 18px; height: 22px; flex: none; }
.st-view { display: flex; align-items: center; justify-content: center; width: 42px; height: 22px; }
.st-view svg { width: 16px; height: 16px; }
.st-view-on { background: #d2d0ce; }
.zoom-sign { width: 20px; text-align: center; font-size: 14px; color: #555; }
.zoom-plus { width: 18px; }
.zoom-track { position: relative; display: flex; align-items: center; width: 105px; height: 22px; }
.zoom-track::before { content: ""; flex: 1; height: 1px; background: #bbb; }
.zoom-knob { position: absolute; left: 43px; top: 3px; width: 5px; height: 16px; background: #6a6a6a; }
.zoom-tick { position: absolute; left: 52px; top: 8px; width: 1px; height: 6px; background: #aaa; }
.zoom-pct { width: 36px; text-align: center; font-size: 10.500px; }
.zoom-fit { display: flex; justify-content: center; width: 28px; }
.zoom-fit svg { width: 16px; height: 18px; }

/* taskbar */
.taskbar { display: flex; align-items: center; flex: none; height: 42px; background: #1c1c1d; border-top: 1px solid #3a3a3a; color: #e4e4e4; }
.start { display: flex; align-items: center; justify-content: center; width: 51px; flex: none; }
.start svg { width: 18px; height: 18px; }
.task-search { display: flex; align-items: center; flex: none; width: 362px; height: 41px; padding-left: 12px; background: #383637; border: 1px solid #5a5a5a; border-top: 0; font-size: 15.500px; color: #d2d2d2; }
.task-search svg { width: 17px; height: 18px; margin-right: 12px; }
.task-cell { position: relative; display: flex; align-items: center; justify-content: center; flex: none; width: 52.300px; height: 41px; }
.task-cell svg { width: 26px; height: 26px; }
.task-cortana { width: 50px; }
.task-view { width: 53px; }
.task-view svg { width: 17px; height: 17px; }
.ring { width: 16px; height: 16px; border: 2.500px solid #eee; border-radius: 50%; }
.lyncl { display: flex; align-items: center; justify-content: center; width: 26px; height: 32px; background: #0f8ad0; color: #fff; font-size: 20px; font-weight: 700; font-family: "Liberation Sans", sans-serif; }
.task-running::after { content: ""; position: absolute; left: 4px; right: 4px; bottom: 0; height: 2px; background: #7db4ea; }
.task-active { background: #474747; }
.task-active::after { left: 0; right: 0; }
.tray { display: grid; grid-template-columns: 26px 49px 31px 21px 31px 19px 30px 21px 42px 73px 58px; margin-left: auto; height: 41px; }
.tray-item { display: flex; align-items: center; justify-content: center; text-align: center; white-space: nowrap; }
.tray-weather { width: 22px; height: 22px; }
.tray-temp { font-size: 14.500px; letter-spacing: -.3px; }
.tray-chev { width: 15px; height: 8px; }
.tray-tiny { width: 13px; height: 20px; }
.tray-wide { width: 17px; height: 15px; }
.tray-lang { font-size: 11.500px; letter-spacing: -.2px; }
.tray-clock { font-size: 12.800px; line-height: 20px; letter-spacing: -.25px; }
.tray-note { position: relative; border-right: 1px solid #555; padding-right: 4px; }
.note-icon { width: 18px; height: 20px; margin-top: -5px; }
.note-badge { position: absolute; left: 21px; top: 17px; display: flex; align-items: center; justify-content: center; width: 20px; height: 20px; border: 1px solid #777; border-radius: 50%; background: #1c1c1d; font-size: 11px; font-weight: 600; color: #e4e4e4; }

/* share notice */
.share-bar { position: absolute; left: 605px; top: 814px; display: flex; align-items: center; width: 409px; height: 44px; padding-left: 13px; background: #2e2e30; box-shadow: 0 1px 3px rgba(0,0,0,.4); color: #d8d8d8; font-size: 12px; }
.pause { flex: none; width: 6px; height: 12px; border: solid #ddd; border-width: 0 2px; }
.share-text { flex: none; width: 226px; margin-left: 9px; letter-spacing: -.05px; white-space: nowrap; }
.stop { flex: none; width: 107px; height: 33px; padding: 0; border-radius: 4px; background: #7f9cf5; color: #27345f; font-size: 12.500px; font-weight: 500; letter-spacing: -.25px; }
.hide { margin-left: 11px; color: #8fa6e8; font-size: 12px; letter-spacing: -.25px; }

/* bottom */
.dock { display: flex; justify-content: space-between; align-items: center; padding: 0 30px; background: #02001a; }
.dock-btn { display: block; width: 60px; height: 60px; border-radius: 50%; background: #fff; }
.floor { background: #000; }
```
